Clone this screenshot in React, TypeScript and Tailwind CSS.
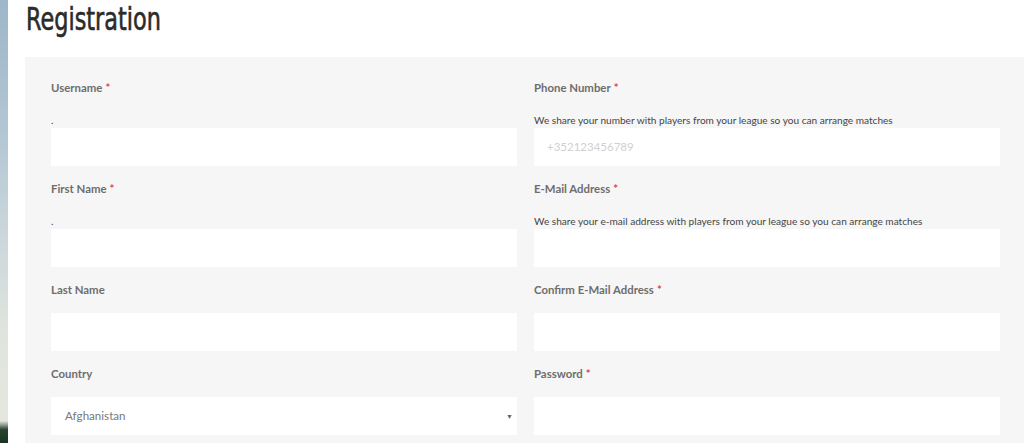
import React from "react";

type Field = {
  label: string;
  required?: boolean;
  helper?: string;
  placeholder?: string;
  select?: string;
};

const rows: [Field, Field][] = [
  [
    { label: "Username", required: true, helper: "." },
    {
      label: "Phone Number",
      required: true,
      helper: "We share your number with players from your league so you can arrange matches",
      placeholder: "+352123456789",
    },
  ],
  [
    { label: "First Name", required: true, helper: "." },
    {
      label: "E-Mail Address",
      required: true,
      helper: "We share your e-mail address with players from your league so you can arrange matches",
    },
  ],
  [
    { label: "Last Name" },
    { label: "Confirm E-Mail Address", required: true },
  ],
  [
    { label: "Country", select: "Afghanistan" },
    { label: "Password", required: true },
  ],
];

function FieldView({ f }: { f: Field }) {
  return (
    <div className="flex flex-col">
      <div className="h-[18px] leading-[18px] text-[11.4px] font-bold text-[#6e6e6e] mb-[14px]">
        {f.label}
        {f.required && <span className="text-[#e0474c] ml-[3px]">*</span>}
      </div>
      {f.helper && (
        <div className="h-[16px] mt-[1px] leading-[16px] text-[10.1px] text-[#454545]">{f.helper}</div>
      )}
      {f.select ? (
        <div className="h-[38px] bg-white flex items-center justify-between pl-[14px] pr-[4px]">
          <span className="text-[11.6px] text-[#777]">{f.select}</span>
          <span className="text-[7px] text-[#666]">▼</span>
        </div>
      ) : (
        <div className="h-[38px] bg-white flex items-center pl-[13px]">
          {f.placeholder && <span className="text-[11.5px] text-[#d0d0d0]">{f.placeholder}</span>}
        </div>
      )}
    </div>
  );
}

export default function App() {
  return (
    <div
      className="w-[1024px] h-[443px] overflow-hidden flex bg-white"
      style={{ fontFamily: "Lato, 'Open Sans', sans-serif" }}
    >
      <div className="w-[8px] shrink-0 bg-[linear-gradient(to_bottom,#9db6c9_0%,#b3c6d3_30%,#cdd8dc_55%,#dfe4dd_75%,#e4e7de_95%,#27432f_97%,#1b3322_100%)]" />
      <div className="flex-1 flex flex-col pl-[17px]">
        <div className="h-[57px] flex items-start">
          <h1
            className="text-[31.5px] leading-[40px] font-normal text-[#2b2b2b] mt-[-1px] ml-[1px] origin-left scale-x-[0.79] [-webkit-text-stroke:0.6px_#2b2b2b]"
            style={{ fontFamily: "'DejaVu Sans Condensed', 'DejaVu Sans', sans-serif" }}
          >
            Registration
          </h1>
        </div>
        <div className="flex-1 bg-[#f6f6f6] pt-[22px] pl-[26px] pr-[24px]">
          <div className="grid grid-cols-2 gap-x-[17px] gap-y-[14px]">
            {rows.map((r, i) => (
              <React.Fragment key={i}>
                <FieldView f={r[0]} />
                <FieldView f={r[1]} />
              </React.Fragment>
            ))}
          </div>
        </div>
      </div>
    </div>
  );
}
